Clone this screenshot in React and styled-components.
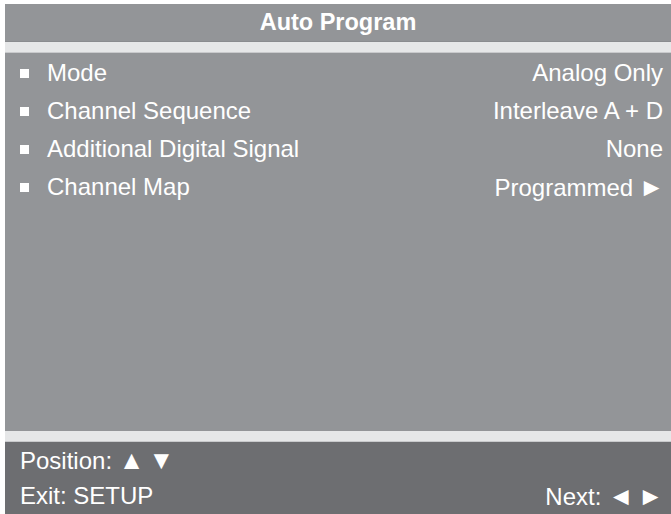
import styled, { createGlobalStyle } from "styled-components";

const GlobalStyle = createGlobalStyle`
  html, body {
    margin: 0;
    padding: 0;
    background: #ffffff;
  }
  body {
    font-family: "Liberation Sans", Arial, sans-serif;
  }
`;

const Screen = styled.div`
  display: flex;
  flex-direction: column;
  width: 666px;
  height: 510px;
  margin: 4px 0 0 5px;
  background-color: #939598;
  color: #ffffff;
`;

const TitleBar = styled.div`
  display: flex;
  justify-content: center;
  align-items: center;
  height: 37px;
  font-size: 23.5px;
  font-weight: bold;
  border-bottom: 1px solid #8a8c8f;
`;

const Divider = styled.div`
  height: 10px;
  background-color: #e6e7e8;
  border-bottom: 1px solid #c9cacc;
`;

const Menu = styled.div`
  flex: 1;
  display: flex;
  flex-direction: column;
  padding: 1px 8px 0 15px;
`;

const Row = styled.div`
  display: flex;
  align-items: center;
  height: 38px;
  font-size: 24px;
`;

const Bullet = styled.span`
  width: 9px;
  height: 9px;
  margin-right: 18px;
  background-color: #ffffff;
`;

const Label = styled.span`
  flex: 1;
`;

const Value = styled.span`
  text-align: right;
`;

const Arrow = styled.span`
  font-size: 1.08em;
  letter-spacing: -1.5px;
`;

const Footer = styled.div`
  display: flex;
  flex-direction: column;
  height: 72px;
  padding: 0 9px 0 15px;
  background-color: #6d6e71;
  font-size: 24px;
`;

const FooterRow = styled.div`
  display: flex;
  justify-content: space-between;
  align-items: center;
  height: 36px;
`;

const rows = [
  { label: "Mode", value: "Analog Only" },
  { label: "Channel Sequence", value: "Interleave A + D" },
  { label: "Additional Digital Signal", value: "None" },
  { label: "Channel Map", value: "Programmed", arrow: true },
];

export default function App() {
  return (
    <>
      <GlobalStyle />
      <Screen>
        <TitleBar>Auto Program</TitleBar>
        <Divider />
        <Menu>
          {rows.map((row) => (
            <Row key={row.label}>
              <Bullet />
              <Label>{row.label}</Label>
              <Value>
                {row.value}
                {row.arrow && <Arrow> ►</Arrow>}
              </Value>
            </Row>
          ))}
        </Menu>
        <Divider />
        <Footer>
          <FooterRow>
            <span>
              Position: <Arrow>▲ ▼</Arrow>
            </span>
          </FooterRow>
          <FooterRow>
            <span>Exit: SETUP</span>
            <span>
              Next: <Arrow>◄ ►</Arrow>
            </span>
          </FooterRow>
        </Footer>
      </Screen>
    </>
  );
}
